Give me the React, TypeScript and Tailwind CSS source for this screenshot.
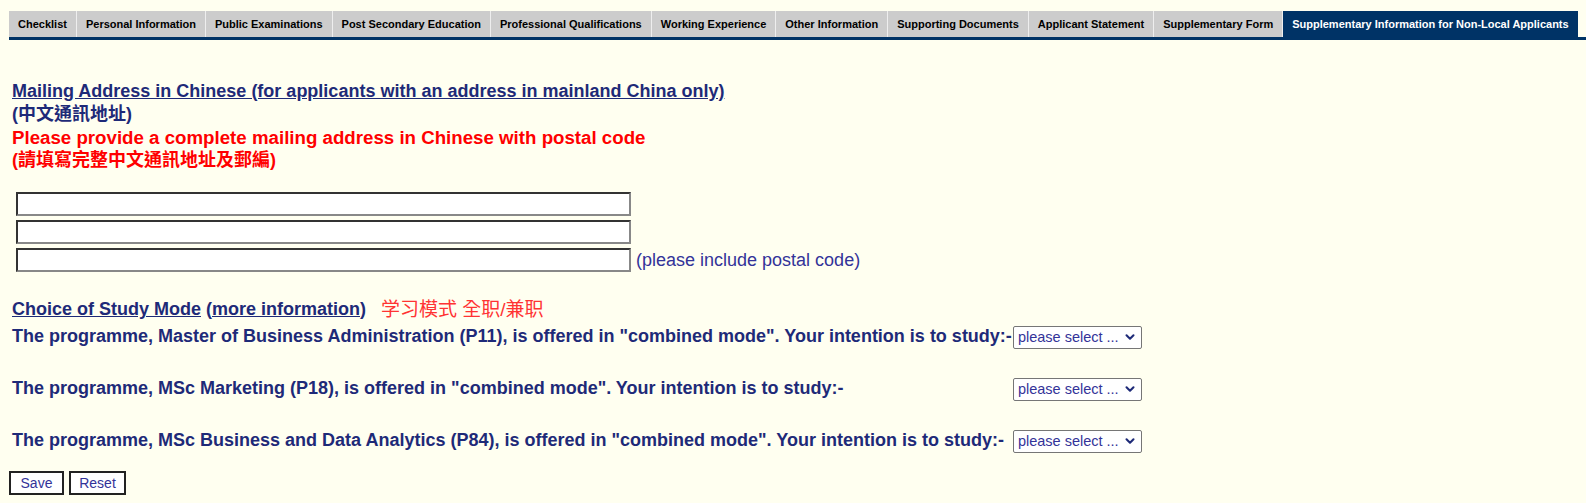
import React from "react";
import { ChevronDown } from "lucide-react";

const tabs = [
  "Checklist",
  "Personal Information",
  "Public Examinations",
  "Post Secondary Education",
  "Professional Qualifications",
  "Working Experience",
  "Other Information",
  "Supporting Documents",
  "Applicant Statement",
  "Supplementary Form",
  "Supplementary Information for Non-Local Applicants",
];

const programmes = [
  'The programme, Master of Business Administration (P11), is offered in "combined mode". Your intention is to study:-',
  'The programme, MSc Marketing (P18), is offered in "combined mode". Your intention is to study:-',
  'The programme, MSc Business and Data Analytics (P84), is offered in "combined mode". Your intention is to study:-',
];

const ModeSelect = () => (
  <div className="relative h-[23px] w-[129px]">
    <select className="h-full w-full appearance-none rounded-[2px] border border-[#767676] bg-white pl-[4px] text-[14.5px] font-normal leading-none text-[#333399] outline-none">
      <option>please select ...</option>
      <option>Full-time</option>
      <option>Part-time</option>
    </select>
    <ChevronDown
      size={14}
      strokeWidth={3.5}
      className="pointer-events-none absolute right-[5px] top-[5px] text-[#1e2a78]"
    />
  </div>
);

export default function App() {
  return (
    <div className="min-h-screen bg-[#fffff0] font-['Liberation_Sans',Arial,'Noto_Sans_CJK_TC',sans-serif] text-[#1e2a78]">
      {/* tab strip */}
      <div className="ml-[9px] pt-[11px]">
        <div className="flex border-b-[3px] border-[#003366]">
          {tabs.map((t, i) => {
            const active = i === tabs.length - 1;
            return (
              <div
                key={t}
                className={
                  active
                    ? "flex h-[26px] items-center whitespace-nowrap border-l border-[#eeeeee] bg-[#003366] px-[9px] text-[11px] font-bold text-white"
                    : "flex h-[26px] items-center whitespace-nowrap border-l border-[#eeeeee] bg-[#cccccc] px-[9px] text-[11px] font-bold text-black first:border-l-0"
                }
              >
                {t}
              </div>
            );
          })}
        </div>
      </div>

      <div className="px-[12px] pt-[40px] text-[18px] font-bold leading-[23px]">
        <div>
          <a href="#" className="underline">
            Mailing Address in Chinese (for applicants with an address in mainland China only)
          </a>
        </div>
        <div>(中文通訊地址)</div>
        <div className="text-[18.7px] text-[#ff0000]">
          Please provide a complete mailing address in Chinese with postal code
        </div>
        <div className="text-[#ff0000]">(請填寫完整中文通訊地址及郵編)</div>

        <div className="ml-[4px] mt-[20px] flex flex-col gap-[4px]">
          <input className="h-[24px] w-[615px] border-2 border-t-[#333333] border-l-[#333333] border-r-[#888888] border-b-[#888888] bg-white outline-none" />
          <input className="h-[24px] w-[615px] border-2 border-t-[#333333] border-l-[#333333] border-r-[#888888] border-b-[#888888] bg-white outline-none" />
          <div className="flex items-center gap-[5px]">
            <input className="h-[24px] w-[615px] border-2 border-t-[#333333] border-l-[#333333] border-r-[#888888] border-b-[#888888] bg-white outline-none" />
            <span className="font-normal text-[#333399]">(please include postal code)</span>
          </div>
        </div>

        <div className="mt-[26px] flex items-center">
          <a href="#" className="underline">
            Choice of Study Mode
          </a>
          <span className="ml-[5px]">
            (<a href="#" className="underline">more information</a>)
          </span>
          <span className="ml-[15px] text-[19px] font-normal text-[#ff3333]">学习模式 全职/兼职</span>
        </div>

        <div className="mt-[4px] grid grid-cols-[auto_auto] items-center justify-start gap-x-[1px] gap-y-[29px]">
          {programmes.map((p) => (
            <React.Fragment key={p}>
              <div>{p}</div>
              <ModeSelect />
            </React.Fragment>
          ))}
        </div>
      </div>

      <div className="ml-[9px] mt-[19px] flex gap-[5px] pb-[7px]">
        <button className="h-[24px] w-[55px] border-2 border-[#222222] bg-white text-[14px] text-[#333399]">
          Save
        </button>
        <button className="h-[24px] w-[57px] border-2 border-[#222222] bg-white text-[14px] text-[#333399]">
          Reset
        </button>
      </div>
    </div>
  );
}
